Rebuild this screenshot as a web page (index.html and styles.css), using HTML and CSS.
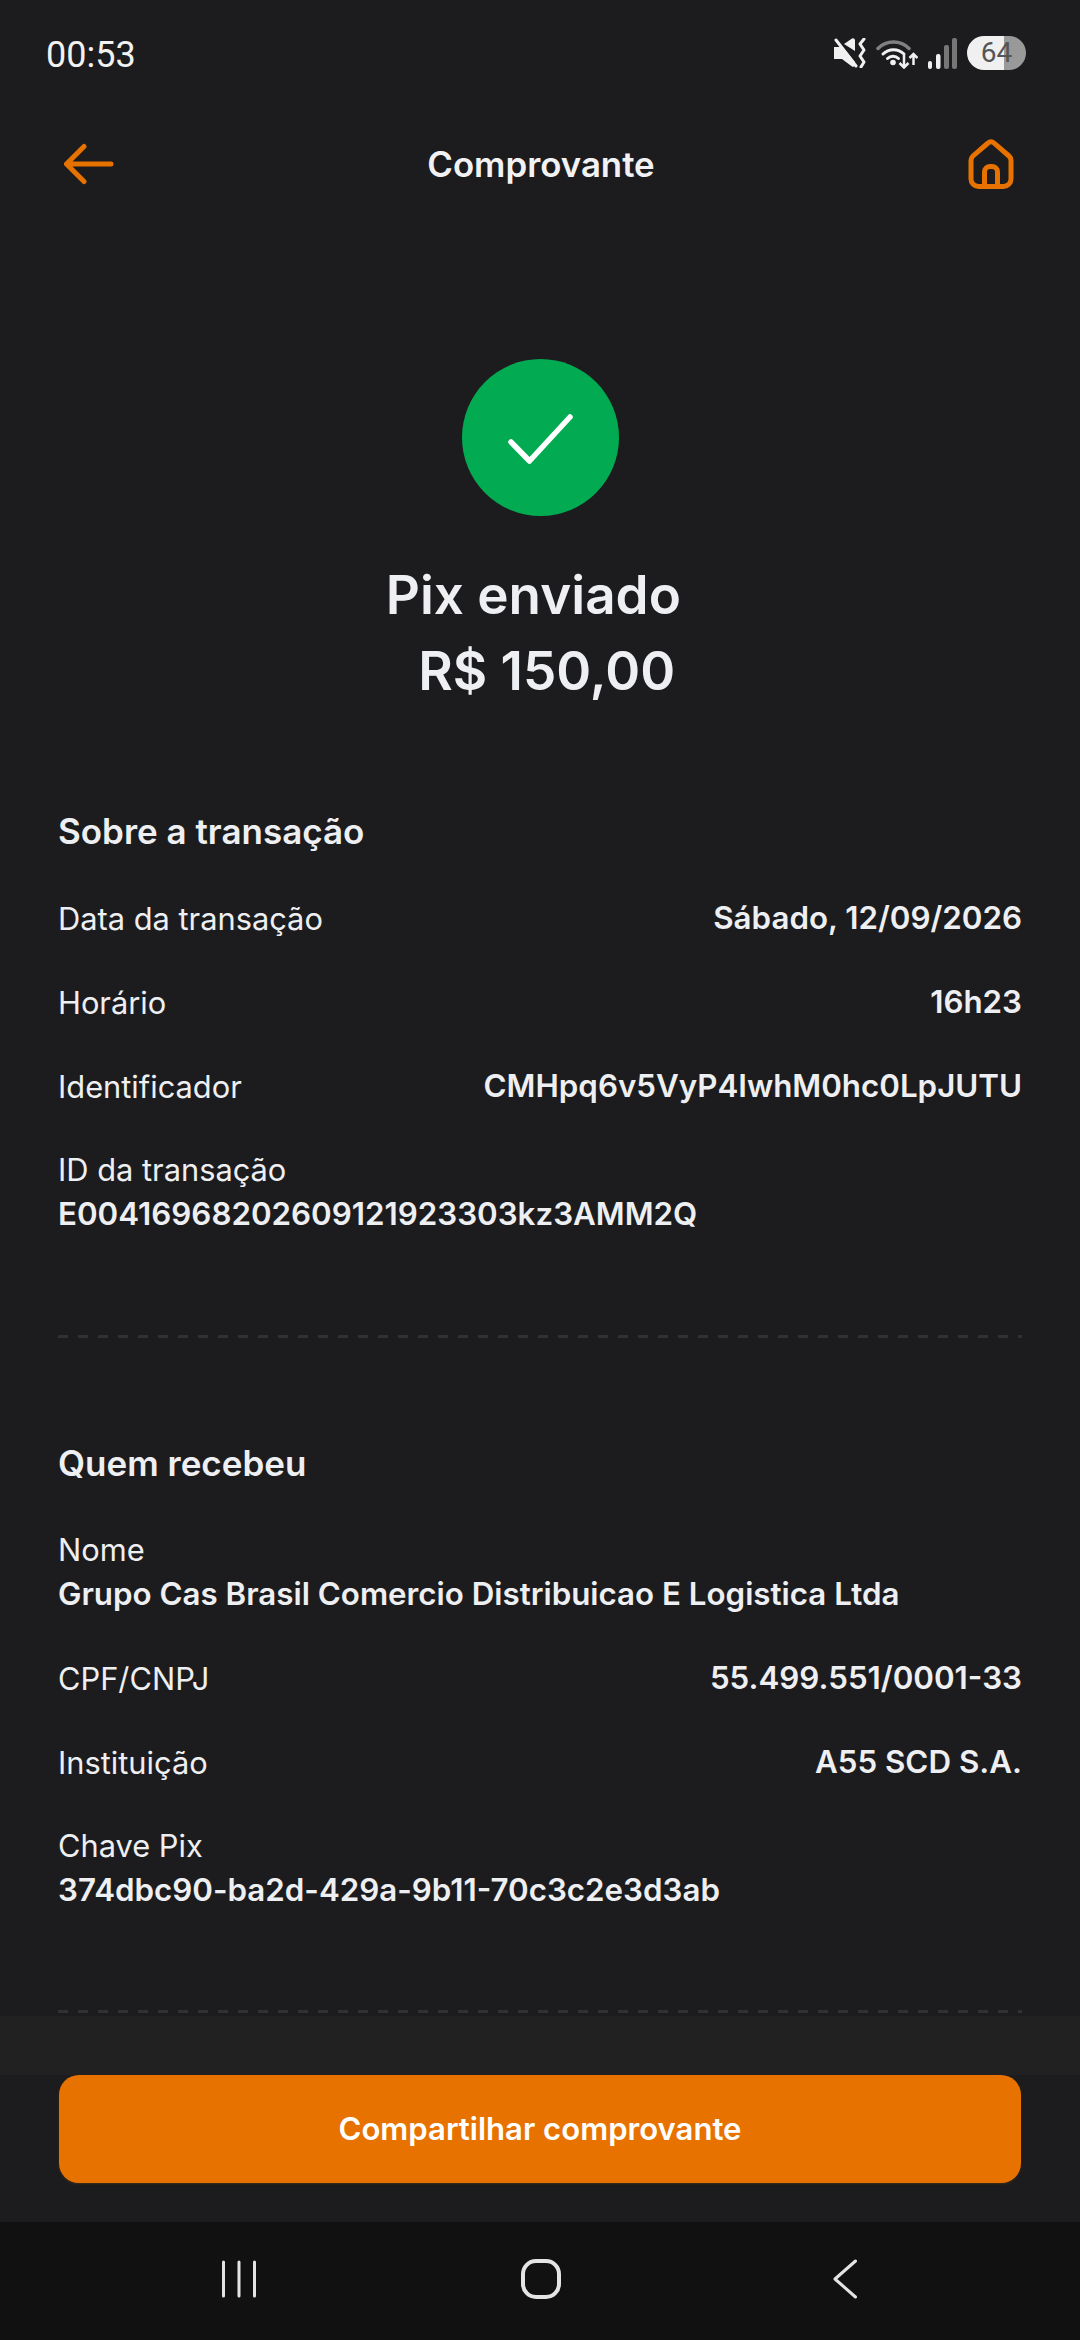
FILE: index.html
```html
<!DOCTYPE html>
<html>
<head>
    <meta charset="utf-8">
    <title>Comprovante</title>
    <link rel="stylesheet" href="styles.css">
</head>
<body>
    <div class="phone">
        <div class="status-bar">
            <span class="clock">00:53</span>
            <div class="status-icons">
                <svg width="33" height="30" viewBox="0 0 33 30">
                    <path d="M1 9h7l1-1 13 16v3a2 2 0 0 1-3 1.500L9 21H1z" fill="#f0f0f0"/>
                    <path d="M11 6l8-5.500a2 2 0 0 1 3 1.500v11z" fill="#f0f0f0"/>
                    <path d="M3 2l20 26" stroke="#f0f0f0" stroke-width="3" stroke-linecap="round" fill="none"/>
                    <path d="M31 1l-4 5 4 6-4 6 4 6-3 5" stroke="#f0f0f0" stroke-width="3" stroke-linecap="round" stroke-linejoin="round" fill="none"/>
                </svg>
                <svg width="42" height="31" viewBox="0 0 42 31">
                    <path d="M2 10.500a22 22 0 0 1 31 0" stroke="#808080" stroke-width="3.500" stroke-linecap="round" fill="none"/>
                    <path d="M7 16a15 15 0 0 1 21 0" stroke="#f0f0f0" stroke-width="3" stroke-linecap="round" fill="none"/>
                    <path d="M11.500 20.500a8 8 0 0 1 11 0" stroke="#f0f0f0" stroke-width="3" stroke-linecap="round" fill="none"/>
                    <circle cx="17" cy="24.500" r="2.800" fill="#f0f0f0"/>
                    <path d="M28 17v12M23.500 25l4.500 4.500 4.500-4.500" stroke="#f0f0f0" stroke-width="2.500" fill="none"/>
                    <path d="M37.500 27V16M33.500 20l4-4 4 4" stroke="#f0f0f0" stroke-width="2.500" fill="none"/>
                </svg>
                <svg width="29" height="31" viewBox="0 0 29 31">
                    <rect x="0" y="23" width="4" height="8" rx="2" fill="#f0f0f0"/>
                    <rect x="8" y="16" width="4.500" height="15" rx="2" fill="#f0f0f0"/>
                    <rect x="16" y="7" width="5" height="24" rx="2" fill="#777"/>
                    <rect x="24" y="0" width="5" height="31" rx="2" fill="#777"/>
                </svg>
                <div class="battery"><span>64</span></div>
            </div>
        </div>

        <div class="top-nav">
            <svg width="52" height="42" viewBox="0 0 52 42">
                <path d="M49 21H4.500M22 3.500L4.500 21 22 38.500" stroke="#e87200" stroke-width="5" stroke-linecap="round" stroke-linejoin="round" fill="none"/>
            </svg>
            <h1>Comprovante</h1>
            <svg width="46" height="50" viewBox="0 0 46 50">
                <path d="M20 4a4.500 4.500 0 0 1 6 0L41 17a6 6 0 0 1 2 4.500V40a7.500 7.500 0 0 1-7.500 7.500h-25A7.500 7.500 0 0 1 3 40V21.500a6 6 0 0 1 2-4.500z" stroke="#e87200" stroke-width="5" stroke-linejoin="round" fill="none"/>
                <path d="M16.500 47V33a5.500 5.500 0 0 1 5.500-5.500h2a5.500 5.500 0 0 1 5.500 5.500v14" stroke="#e87200" stroke-width="5" fill="none"/>
            </svg>
        </div>

        <div class="content">
            <div class="hero">
                <div class="check-circle">
                    <svg width="66" height="52" viewBox="0 0 66 52">
                        <path d="M4 30L22.500 49 63 5" stroke="#fff" stroke-width="5.500" stroke-linecap="round" stroke-linejoin="round" fill="none"/>
                    </svg>
                </div>
                <h2 class="hero-title">Pix enviado </h2>
                <h2 class="hero-title"> R$ 150,00</h2>
            </div>

            <section class="block block-first">
                <h3>Sobre a transação</h3>
                <div class="row"><span class="label">Data da transação</span><span class="value">Sábado, 12/09/2026</span></div>
                <div class="row"><span class="label">Horário</span><span class="value">16h23</span></div>
                <div class="row"><span class="label">Identificador</span><span class="value">CMHpq6v5VyP4IwhM0hc0LpJUTU</span></div>
                <div class="stack"><span class="label">ID da transação</span><span class="value">E00416968202609121923303kz3AMM2Q</span></div>
            </section>

            <div class="dashed"></div>

            <section class="block">
                <h3>Quem recebeu</h3>
                <div class="stack"><span class="label">Nome</span><span class="value">Grupo Cas Brasil Comercio Distribuicao E Logistica Ltda</span></div>
                <div class="row"><span class="label">CPF/CNPJ</span><span class="value">55.499.551/0001-33</span></div>
                <div class="row"><span class="label">Instituição</span><span class="value">A55 SCD S.A.</span></div>
                <div class="stack"><span class="label">Chave Pix</span><span class="value">374dbc90-ba2d-429a-9b11-70c3c2e3d3ab</span></div>
            </section>

            <div class="dashed"></div>
        </div>

        <div class="footer">
            <div class="footer-strip"></div>
            <div class="share-btn">Compartilhar comprovante</div>
        </div>

        <div class="system-nav">
            <svg width="36" height="38" viewBox="0 0 36 38">
                <path d="M2.500 2v34M18 2v34M33.500 2v34" stroke="#e4e4e4" stroke-width="3" stroke-linecap="round" fill="none"/>
            </svg>
            <svg class="home-btn" width="40" height="40" viewBox="0 0 40 40">
                <rect x="2" y="2" width="36" height="36" rx="13" stroke="#e4e4e4" stroke-width="4" fill="none"/>
            </svg>
            <svg width="24" height="40" viewBox="0 0 24 40">
                <path d="M22.500 2L2 20l20.500 18" stroke="#e4e4e4" stroke-width="3" stroke-linecap="round" stroke-linejoin="round" fill="none"/>
            </svg>
        </div>
    </div>
</body>
</html>
```

FILE: styles.css
```css
* {
    box-sizing: border-box;
}
html, body {
    margin: 0;
    padding: 0;
    background-color: #1c1c1e;
}
.phone {
    width: 1080px;
    height: 2340px;
    display: flex;
    flex-direction: column;
    overflow: hidden;
    font-family: "Inter", "Liberation Sans", sans-serif;
    color: #eeeff2;
}

/* status bar */
.status-bar {
    height: 108px;
    padding: 0 54px 0 46px;
    display: flex;
    align-items: center;
    justify-content: space-between;
}
.clock {
    font-family: "Roboto", sans-serif;
    font-size: 36px;
    color: #f2f2f2;
    padding-top: 1px;
}
.status-icons {
    display: flex;
    align-items: center;
    gap: 10px;
    padding-bottom: 2px;
}
.battery {
    width: 59px;
    height: 34px;
    border-radius: 17px;
    background: linear-gradient(to right, #f0f0f0 0, #f0f0f0 63%, #999 63%, #999 100%);
    color: #555;
    font-family: "Roboto", sans-serif;
    font-size: 28px;
    line-height: 34px;
    text-align: center;
}

/* top nav */
.top-nav {
    height: 112px;
    padding: 0 66px 0 62px;
    display: flex;
    align-items: center;
    justify-content: space-between;
}
.top-nav h1 {
    margin: 0;
    font-size: 34.800px;
    font-weight: 600;
    color: #f2f2f4;
}

/* scroll area */
.content {
    flex: 1;
    min-height: 0;
    padding: 0 58px;
}
.hero {
    padding-top: 139px;
    display: flex;
    flex-direction: column;
    align-items: center;
}
.check-circle {
    width: 157px;
    height: 157px;
    border-radius: 50%;
    background-color: #02ab52;
    display: flex;
    align-items: center;
    justify-content: center;
    margin-bottom: 41px;
}
.hero-title {
    margin: 0;
    font-size: 53px;
    font-weight: 600;
    line-height: 76px;
    white-space: pre;
}
.block {
    padding-top: 102px;
}
.block-first {
    padding-top: 99px;
}
.block h3 {
    margin: 0;
    font-size: 35px;
    font-weight: 600;
    line-height: 46px;
}
.row {
    margin-top: 38px;
    height: 46px;
    display: flex;
    align-items: center;
    justify-content: space-between;
}
.block h3 + .row,
.block h3 + .stack {
    margin-top: 41px;
}
.stack {
    margin-top: 38px;
    display: flex;
    flex-direction: column;
}
.label, .value {
    line-height: 45px;
    color: #eeeff2;
}
.label {
    font-size: 30.800px;
}
.value {
    font-size: 31.300px;
    font-weight: 600;
}
.dashed {
    height: 3px;
    margin-top: 98px;
    background-image: repeating-linear-gradient(to right, #303134 0, #303134 10px, transparent 10px, transparent 20px);
}
.block + .dashed:last-child {
    margin-top: 97px;
}

/* bottom button */
.footer {
    height: 206px;
    display: flex;
    flex-direction: column;
}
.footer-strip {
    height: 59px;
    background-color: #212121;
}
.share-btn {
    margin: 0 59px;
    height: 108px;
    border-radius: 20px;
    background-color: #e87200;
    color: #fff;
    font-size: 31.100px;
    font-weight: 600;
    box-shadow: 0 1px 2px rgba(232, 114, 0, 0.2);
    display: flex;
    align-items: center;
    justify-content: center;
}

/* android nav */
.system-nav {
    height: 118px;
    padding: 0 223px 4px 221px;
    background-color: #111;
    display: flex;
    align-items: center;
    justify-content: space-between;
}
.home-btn {
    margin-right: 8px;
}
```
